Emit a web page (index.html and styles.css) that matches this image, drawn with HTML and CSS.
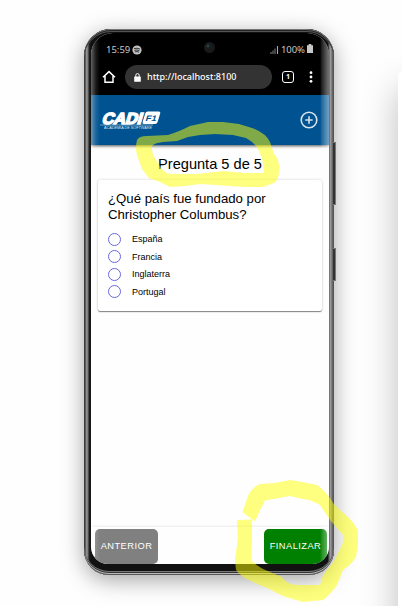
FILE: index.html
```
<!DOCTYPE html>
<html lang="es">
<head>
<meta charset="utf-8">
<title>Pregunta 5 de 5</title>
<link rel="stylesheet" href="styles.css">
</head>
<body>
<main class="stage">
  <div class="phone">
    <div class="screen">
      <div class="status">
        <span class="time">15:59</span>
        <svg class="spot" width="10" height="10" viewBox="0 0 10 10"><circle cx="5" cy="5" r="4.6" fill="#c4c4c4"/><path d="M2 3.6Q5 2.6 8 4M2.4 5.3Q5 4.5 7.4 5.6M2.8 6.9Q5 6.2 7 7.1" fill="none" stroke="#222" stroke-width=".9"/></svg>
        <svg class="signal" width="9" height="9" viewBox="0 0 9 9"><path d="M1 9V7M3 9V5.500M5 9V3.500" stroke="#777" stroke-width="1.1"/><path d="M7.500 9V1" stroke="#aaa" stroke-width="1.1"/></svg>
        <span class="percent">100%</span>
        <svg class="battery" width="6" height="9" viewBox="0 0 6 9"><path d="M0 1.200H1.700V0H4.300V1.200H6V9H0Z" fill="#c8c8c8"/></svg>
      </div>
      <div class="browser">
        <svg class="home" width="14" height="14" viewBox="0 0 14 14"><path d="M1 7.300L7 1.600 13 7.300M3 6V12.200H11V6" fill="none" stroke="#fff" stroke-width="1.5"/></svg>
        <div class="address">
          <svg width="7" height="9" viewBox="0 0 7 9"><rect x=".2" y="3.500" width="6.600" height="5.300" rx=".6" fill="#fff"/><path d="M1.800 4V2.300a1.700 1.700 0 0 1 3.400 0V4" fill="none" stroke="#fff" stroke-width="1"/></svg>
          <span>http://localhost:8100</span>
        </div>
        <span class="tabs">1</span>
        <svg class="dots" width="4" height="12" viewBox="0 0 4 12"><g fill="#fff"><circle cx="2" cy="1.700" r="1.400"/><circle cx="2" cy="6" r="1.400"/><circle cx="2" cy="10.300" r="1.400"/></g></svg>
      </div>
      <header class="toolbar">
        <svg class="logo" width="64" height="24" viewBox="0 0 64 24">
          <g transform="translate(1 14) skewX(-17)" fill="#fff" font-family="Liberation Sans" font-weight="bold">
            <text x="0" y="-.5" font-size="16" textLength="40" lengthAdjust="spacingAndGlyphs" stroke="#fff" stroke-width="1.500">CADI</text>
            <rect x="41" y="-12.500" width="15" height="12.500" rx="2"/>
            <text x="43" y="-3.500" font-size="8" textLength="11" lengthAdjust="spacingAndGlyphs" fill="#005390">F1</text>
          </g>
          <path d="M0 15H53" stroke="#c7d9e6" stroke-width=".6"/>
          <text x="4" y="19" font-family="Liberation Sans" font-size="3.500" textLength="48" lengthAdjust="spacingAndGlyphs" fill="#dce8f0">ACADEMIA DE SOFTWARE</text>
        </svg>
        <svg class="plus" width="18" height="18" viewBox="0 0 18 18"><circle cx="9" cy="9" r="7.800"/><path d="M9 5.300V12.700M5.300 9H12.700"/></svg>
      </header>
      <section class="content">
        <h1>Pregunta 5 de 5</h1>
        <div class="card">
          <h2>¿Qué país fue fundado por<br>Christopher Columbus?</h2>
          <ul>
            <li><i></i>España</li>
            <li><i></i>Francia</li>
            <li><i></i>Inglaterra</li>
            <li><i></i>Portugal</li>
          </ul>
        </div>
      </section>
      <footer>
        <button class="prev">ANTERIOR</button>
        <button class="finish">FINALIZAR</button>
      </footer>
      <div class="glare"></div>
    </div>
    <span class="camera"></span>
    <span class="key volume"></span>
    <span class="key power"></span>
  </div>
  <div class="side"></div>
  <svg class="marker" width="402" height="606" viewBox="0 0 402 606">
    <path d="M137 140Q139 136 147 136L168 135Q178 132 190 126L208 122 223 122 239 124 252 128Q266 133 270 142L274 154Q280 160 279 170 279 180 274 183L263 187 247 187 230 186 200 184 185 186 170 187 160 182 149 178 142 169 137 155Q135 148 137 140ZM152 146Q154 143 163 142L177 141 188 137 200 135 215 134 233 135 246 138Q255 143 258 149L262 158 264 173 245 173 223 171 197 174 170 174Q162 172 158 163 151 154 152 146Z"/>
    <path d="M242.500 512L248 496Q252 487 260 484L275 483 290 480 302 482 317 485Q327 492 333 503L340 510 348 517Q357 526 358 532L358 544 356 557Q351 565 343 570L337 585Q331 594 323 600L303 602 283 596 267 588 253 582Q241 577 236 570L235 560 238 538 237 520 252 519.500 252 541 251 560Q257 567 270 572L282 577Q286 584 297 585L320 585 323 575 334 561 340 549Q344 543 343 535L330 520 320 505Q310 499 303 499L290 496 265 500.500 260 510 255 521.500Z"/>
  </svg>
</main>
</body>
</html>
```
FILE: styles.css
```
* { box-sizing: border-box; }
body { margin: 0; background: #fefefe; font-family: "Liberation Sans", Arial, sans-serif; color: #000; }
.stage { position: relative; width: 402px; height: 606px; overflow: hidden; padding: 29px 0 0 84px; }
.phone {
  position: relative; width: 250px; height: 546px; padding: 4px 5px 11px 7px; border-radius: 27px 27px 25px 25px;
  background: linear-gradient(90deg, #555 0, #222 1px, #999 2px, #777 4px, #222 5px, #111 7px, #111 244px, #666 245px, #aaa 247px, #555 248px, #777 249px, #333 250px);
  box-shadow: inset 0 1px 0 #777, inset 0 2px 0 #222, inset 0 3px 0 #555, inset 0 -1px 0 #555, inset 0 -2px 0 #bbb, inset 0 -3px 0 #333, inset 0 -4px 0 #777, 0 5px 22px rgba(0,0,0,.36);
}
.screen { position: relative; display: flex; flex-direction: column; width: 238px; height: 531px; overflow: hidden; background: #fefefe; border-radius: 22px 22px 17px 17px; }
.status { display: flex; align-items: center; height: 31px; padding: 2px 15px 0 15px; background: #000; color: #c8c8c8; font: 9.500px/12px "Noto Sans", sans-serif; }
.spot { margin-left: 2px; }
.signal { margin-left: auto; margin-right: 2px; }
.percent { width: 26px; font-size: 9.500px; letter-spacing: -.1px; }
.battery { margin: 0 1px 2px 0; }
.browser { display: flex; align-items: flex-start; height: 31px; padding: 1px 16px 0 11px; background: #000; }
.home { margin-top: 5px; }
.address { display: flex; align-items: center; gap: 6px; width: 147px; height: 24px; margin-left: 9px; padding-left: 9px; border-radius: 12px; background: #333; color: #fff; font: 500 9px/12px "Noto Sans", sans-serif; }
.tabs { width: 12px; height: 12px; margin: 6px 0 0 10px; border: 1.500px solid #fff; border-radius: 3px; color: #fff; text-align: center; font: bold 7px/9px "Noto Sans", sans-serif; }
.dots { margin: 6px 0 0 auto; }
.toolbar { position: relative; display: flex; justify-content: space-between; flex: none; height: 50px; padding: 15px 11px 0 9px; background: #005390; box-shadow: 0 1px 3px rgba(0,0,0,.7); }
.logo { overflow: visible; }
.plus { margin-top: 1px; fill: none; stroke: #d5e3ed; stroke-width: 1.600; }
.content { flex: 1; padding: 9px 7px 0; }
h1 { margin: 0; font-size: 14.600px; font-weight: 400; line-height: 20px; text-align: center; }
.card { height: 131px; margin-top: 6px; padding: 11px 10px; border-radius: 2px; background: #fff; box-shadow: 0 1px 1px rgba(0,0,0,.45), 0 0 3px rgba(0,0,0,.18); }
h2 { margin: 0; font-size: 13.200px; font-weight: 400; line-height: 16px; white-space: nowrap; }
ul { margin: 7.500px 0 0; padding: 0; list-style: none; }
li { display: flex; align-items: center; gap: 11px; height: 17.500px; font-size: 9px; }
i { width: 13px; height: 13px; border: 1.500px solid #6969df; border-radius: 50%; }
footer { display: flex; justify-content: space-between; height: 37px; padding: 2px 2px 0 4px; box-shadow: 0 -1px 2px rgba(0,0,0,.08); }
button { width: 63px; height: 35px; padding: 0; border: 0; border-radius: 5px; color: #fff; font: 9.300px/35px "Liberation Sans", sans-serif; letter-spacing: .45px; }
.prev { background: #808080; }
.finish { background: #008000; }
.glare { position: absolute; inset: 0; pointer-events: none; background: linear-gradient(90deg, rgba(255,255,255,.38), rgba(255,255,255,.1) 5px, transparent 9px, transparent 229px, rgba(255,255,255,.14) 231px, rgba(255,255,255,.42) 237px); }
.camera { position: absolute; left: 120px; top: 13px; width: 11px; height: 11px; border-radius: 50%; background: radial-gradient(circle at 4px 4px, #426668 0, #172224 1.500px, #191919 4px); }
.key { position: absolute; left: 249px; width: 3px; background: #333; border: solid #777; border-width: 1px 1px 1px 0; }
.volume { top: 113px; height: 63px; }
.power { top: 219px; height: 33px; }
.side { position: absolute; left: 398px; top: 71px; width: 60px; height: 600px; border-radius: 5px; background: #fff; box-shadow: 0 18px 36px rgba(0,0,0,.26); }
.marker { position: absolute; left: 0; top: 0; fill: #ff0; fill-opacity: .5; fill-rule: evenodd; pointer-events: none; }
```
